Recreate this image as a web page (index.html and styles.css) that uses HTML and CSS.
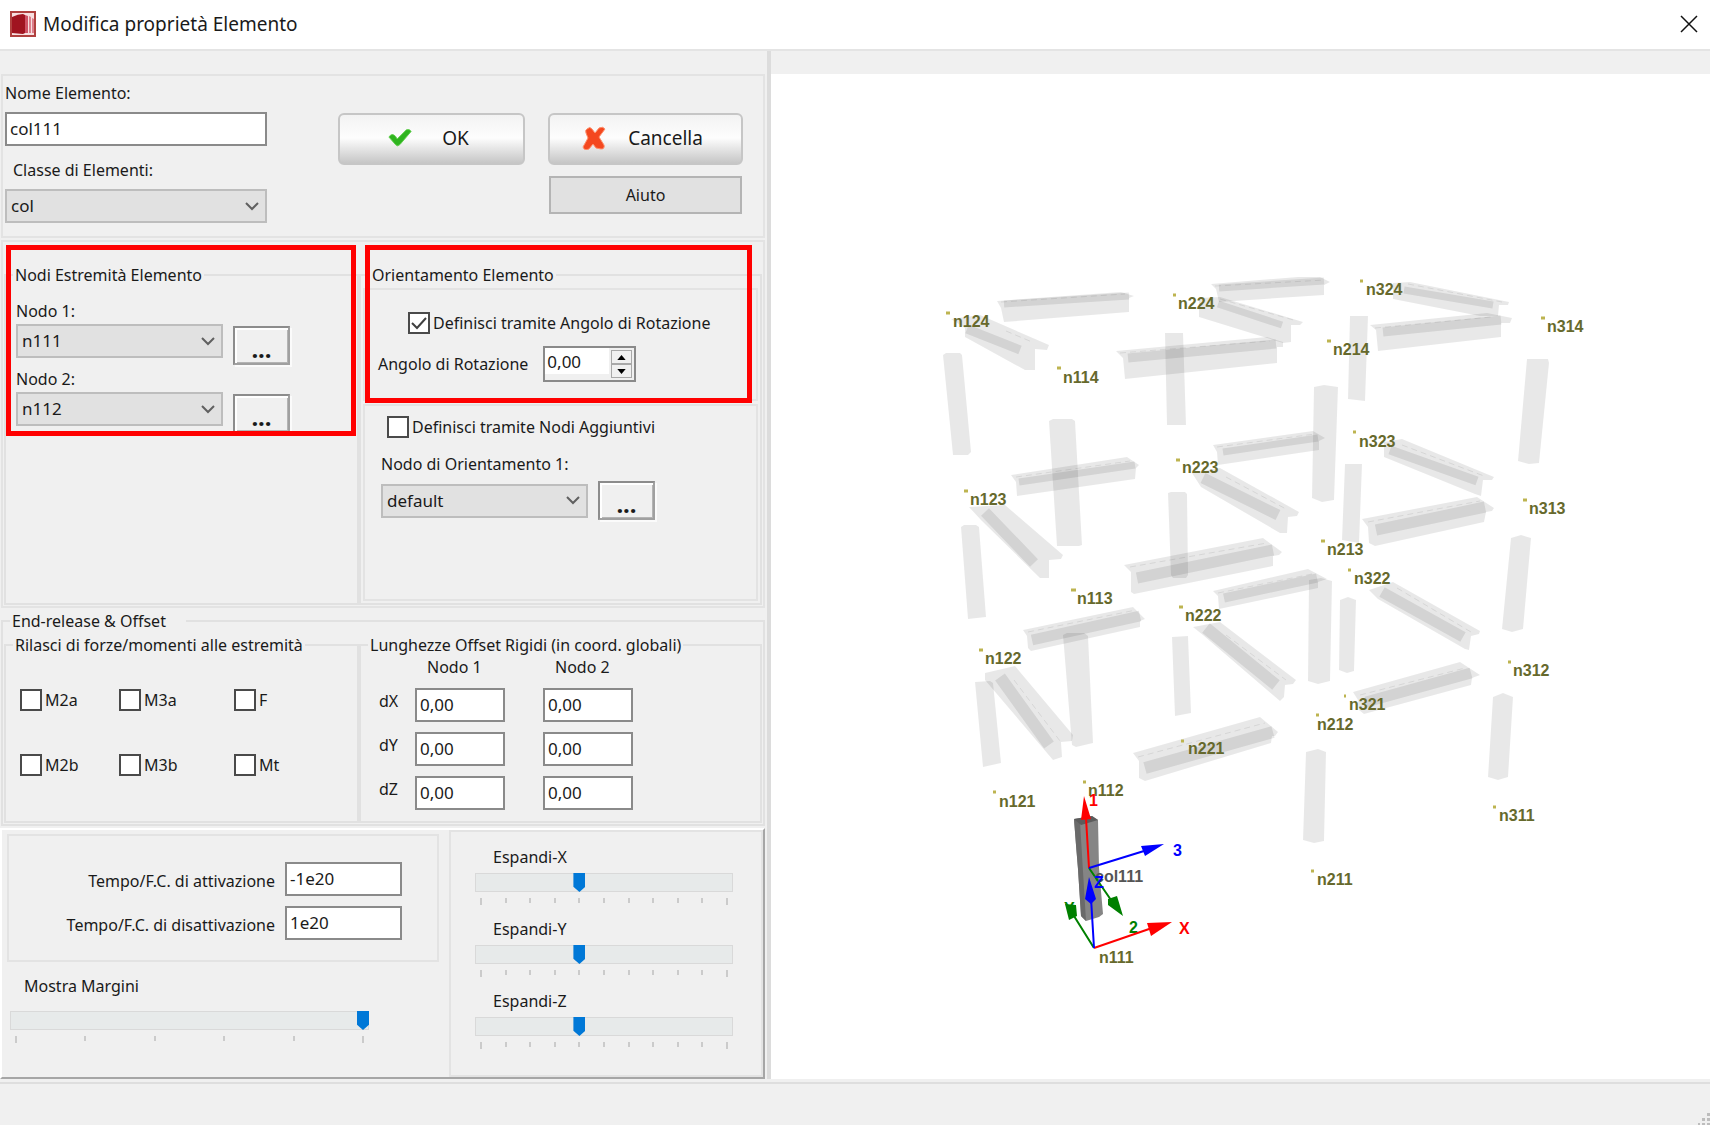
FILE: index.html
```html
<!DOCTYPE html>
<html lang="it">
<head>
<meta charset="utf-8">
<title>Modifica proprietà Elemento</title>
<link rel="stylesheet" href="styles.css">
</head>
<body>
<header class="titlebar">
  <svg class="app-icon" viewBox="0 0 26 26" aria-hidden="true">
    <rect x="1" y="1" width="24" height="24" fill="#f7dfe0" stroke="#b0413f" stroke-width="2"/>
    <path d="M2 6Q8 3 13 3l2 1v18l-2 1-11-1z" fill="#a01420"/>
    <path d="M15 4l3 1v17h-3z" fill="#cf5366"/>
    <path d="M19 5l2 1v16h-2zM22 7l2 1v14h-2z" fill="#dc7f8c"/>
  </svg>
  <h1 class="title">Modifica proprietà Elemento</h1>
  <button class="close" type="button" aria-label="Chiudi"><svg viewBox="0 0 18 18"><path d="M1 1l16 16M17 1 1 17"/></svg></button>
</header>

<main class="workspace">
  <form class="side">
    <section class="panel identity">
      <div class="identity-fields">
        <label for="nome">Nome Elemento:</label>
        <input id="nome" class="field" type="text" value="col111">
        <label class="indent" for="classe">Classe di Elementi:</label>
        <select id="classe" class="combo"><option>col</option></select>
      </div>
      <div class="actions">
        <button class="glossy ok" type="button">
          <svg viewBox="0 0 26 20"><path d="M1 9q3-5 7-1l2 3L20 1q4-1 5 2L13 17q-3 3-5 0z" fill="#2fb41f" stroke="#5fce4c"/></svg>OK</button>
        <div class="action-stack">
          <button class="glossy" type="button">
            <svg viewBox="0 0 24 24"><path d="M5 3q3-3 5 0l3 4 4-5q4-2 6 1l-6 8 5 8q1 4-3 4l-5-1-3-4-4 5q-5 2-6-2l5-9-2-5q-1-3 1-4z" fill="#f4481f" stroke="#ff8f6b"/></svg>Cancella</button>
          <button class="flat" type="button">Aiuto</button>
        </div>
      </div>
    </section>

    <section class="panel geometry">
      <fieldset class="group">
        <legend>Nodi Estremità Elemento</legend>
        <div class="nodes">
          <label for="nodo1">Nodo 1:</label>
          <div class="pick"><select id="nodo1" class="combo"><option>n111</option></select><button class="more" type="button">...</button></div>
          <label for="nodo2">Nodo 2:</label>
          <div class="pick"><select id="nodo2" class="combo"><option>n112</option></select><button class="more" type="button">...</button></div>
        </div>
      </fieldset>
      <fieldset class="group orientation">
        <legend>Orientamento Elemento</legend>
        <div class="panel by-angle">
          <label class="check"><input type="checkbox" checked>Definisci tramite Angolo di Rotazione</label>
          <div class="angle">
            <label for="angolo">Angolo di Rotazione</label>
            <div class="spin">
              <input id="angolo" type="text" value="0,00">
              <div class="spin-buttons">
                <button type="button" aria-label="Aumenta"><svg viewBox="0 0 10 6"><path d="M5 0l5 6H0z"/></svg></button>
                <button type="button" aria-label="Diminuisci"><svg viewBox="0 0 10 6"><path d="M0 0h10L5 6z"/></svg></button>
              </div>
            </div>
          </div>
        </div>
        <div class="panel by-nodes">
          <label class="check"><input type="checkbox">Definisci tramite Nodi Aggiuntivi</label>
          <label class="orient-label" for="orient">Nodo di Orientamento 1:</label>
          <div class="pick centered"><select id="orient" class="combo"><option>default</option></select><button class="more" type="button">...</button></div>
        </div>
      </fieldset>
      <div class="highlight highlight-nodes"></div>
      <div class="highlight highlight-angle"></div>
    </section>

    <fieldset class="group release">
      <legend class="wide">End-release &amp; Offset</legend>
      <div class="halves">
        <fieldset class="group">
          <legend>Rilasci di forze/momenti alle estremità</legend>
          <div class="flags">
            <label class="check"><input type="checkbox">M2a</label>
            <label class="check"><input type="checkbox">M3a</label>
            <label class="check"><input type="checkbox">F</label>
            <label class="check"><input type="checkbox">M2b</label>
            <label class="check"><input type="checkbox">M3b</label>
            <label class="check"><input type="checkbox">Mt</label>
          </div>
        </fieldset>
        <fieldset class="group">
          <legend>Lunghezze Offset Rigidi (in coord. globali)</legend>
          <div class="offsets">
            <span></span><span class="col">Nodo 1</span><span class="col">Nodo 2</span>
            <span class="axis">dX</span><input class="field" aria-label="dX Nodo 1" value="0,00"><input class="field" aria-label="dX Nodo 2" value="0,00">
            <span class="axis">dY</span><input class="field" aria-label="dY Nodo 1" value="0,00"><input class="field" aria-label="dY Nodo 2" value="0,00">
            <span class="axis">dZ</span><input class="field" aria-label="dZ Nodo 1" value="0,00"><input class="field" aria-label="dZ Nodo 2" value="0,00">
          </div>
        </fieldset>
      </div>
    </fieldset>

    <section class="raised">
      <div class="timing">
        <div class="panel times">
          <label for="att">Tempo/F.C. di attivazione</label><input id="att" class="field" value="-1e20">
          <label for="dis">Tempo/F.C. di disattivazione</label><input id="dis" class="field" value="1e20">
        </div>
        <div class="slider margins">
          <label for="margini">Mostra Margini</label>
          <input id="margini" type="range" min="0" max="5" value="5">
          <div class="ticks"><i></i><i></i><i></i><i></i><i></i><i></i></div>
        </div>
      </div>
      <div class="panel expand">
        <div class="slider">
          <label for="ex">Espandi-X</label>
          <input id="ex" type="range" min="0" max="10" value="4">
          <div class="ticks"><i></i><i></i><i></i><i></i><i></i><i></i><i></i><i></i><i></i><i></i><i></i></div>
        </div>
        <div class="slider">
          <label for="ey">Espandi-Y</label>
          <input id="ey" type="range" min="0" max="10" value="4">
          <div class="ticks"><i></i><i></i><i></i><i></i><i></i><i></i><i></i><i></i><i></i><i></i><i></i></div>
        </div>
        <div class="slider">
          <label for="ez">Espandi-Z</label>
          <input id="ez" type="range" min="0" max="10" value="4">
          <div class="ticks"><i></i><i></i><i></i><i></i><i></i><i></i><i></i><i></i><i></i><i></i><i></i></div>
        </div>
      </div>
    </section>
  </form>

  <section class="viewer">
    <svg class="scene" viewBox="771 74 939 1005" role="img" aria-label="Modello 3D">
      <g class="solid">
        <!-- columns -->
        <path d="M943 355l3-2h14l2 2 9 97-3 3h-15z"/>
        <path d="M1049 421l4-2h19l3 2 7 124-3 1h-22z"/>
        <path d="M1165 333h18l3 92h-19z"/>
        <path d="M961 527l3-2h12l3 2 7 90-18 2z"/>
        <path d="M1168 493l3-1h14l2 2 1 81-2 3h-13l-2-3z"/>
        <path d="M1350 316h18l-3 85-17-2z"/>
        <path d="M1314 387l10-2 14 2-4 113-12 2-10-4z"/>
        <path d="M1527 359h21l1 4-10 100-10 1-11-3z"/>
        <path d="M1345 464h17l-3 79-17-3z"/>
        <path d="M1511 538l10-3 10 3-8 91-11 3-10-3z"/>
        <path d="M1309 580l12-2 11 3-2 100-12 3-10-3z"/>
        <path d="M1340 600l8-3 8 3-2 71-7 2-8-3z"/>
        <path d="M1493 697l10-4 10 4-5 80-10 3-10-3z"/>
        <path d="M1172 637l16-1 3 77-16 3z"/>
        <path d="M975 682l15-1 3 2 8 80-18 4z"/>
        <path d="M1063 635l4-2h17l4 3 5 107-17 4-4-2z"/>
        <path d="M1306 752l12-3 8 3-2 89-10 2-11-3z"/>
        <!-- beams -->
        <path d="M997 301l124-9 13 4-5 2v14l-125 10-3-14z"/>
        <path d="M951 319l29-4 69 30-2 5-12-1v21h-10l-60-33v-9z"/>
        <path d="M1211 284l87-7h22l10 5-6 3v10l-105 7-3-13z"/>
        <path d="M1199 298l21-1 83 25-3 3h-9v17l-8 1-84-26z"/>
        <path d="M1116 351l151-14 16 5v5h-6v16l-152 16-2-21z"/>
        <path d="M1393 283l17-1 99 20-1 3h-9l-1 11h-18l-87-17z"/>
        <path d="M1370 325l117-12 25 5-2 5h-9v14l-123 14-2-21z"/>
        <path d="M1011 475l116-18 12 8-3 3-1 11-118 17-1-14z"/>
        <path d="M1213 445l100-14 12 7-6 3v9l-101 15-1-13z"/>
        <path d="M1192 473l28-5 79 44-2 4-9 1-1 16h-7l-79-46z"/>
        <path d="M969 507l36-2 58 50-2 4-12 1v18h-9l-59-58z"/>
        <path d="M1124 565l139-27 19 14-3 3-6 1v10l-139 28-3-2v-20z"/>
        <path d="M1213 591l95-22 19 10-9 3v6l-99 21-1-13z"/>
        <path d="M1384 442l18-3 92 38-2 3h-9l-2 16-6-2-91-37z"/>
        <path d="M1362 519l115-22 17 11-2 3-6 1-2 10-109 24-6-3-1-16z"/>
        <path d="M1369 590l24-8 87 49-1 3-8 2-2 14-4-1-87-50z"/>
        <path d="M1353 692l107-30 20 13-8 3-1 7-107 29-5-4-1-10z"/>
        <path d="M1023 630l110-23 12 12-5 2v6l-109 24-3-3-1-12z"/>
        <path d="M1193 627l27-5 76 58-3 4-8 1-1 12-4 4-77-66z"/>
        <path d="M985 673l30-7 58 69-1 6-11 1 1 15-9 3-68-80z"/>
        <path d="M1133 753l127-36 18 15-3 4h-3l-1 7-126 38-6-3v-17z"/>
      </g>
      <g class="web">
        <path stroke-width="7" d="M1004 304l125-8M1219 288l105-7M1218 304l64 21M1404 290l89 15M1019 482l116-17M1223 452l95-14"/>
        <path stroke-width="9" d="M967 329l53 21M1128 358l148-14M1383 332l118-12M1224 598l93-20M1390 450l87 31"/>
        <path stroke-width="11" d="M1203 478l75 37M985 512l49 51M1137 578l136-28M1376 530l109-23M1382 592l81 45M1366 702l105-29M1032 640l108-24"/>
        <path stroke-width="12" d="M1206 628l70 57M1000 677l49 68M1145 768l128-36"/>
      </g>
      <g class="seams">
        <path d="M1001 302l124-8M1215 286l110-6M1220 299l77 22M1120 353l150-12M1006 331l26 11M1408 284l94 18M1375 328l116-11M1016 477l114-16M1217 447l98-13M1226 477l60 32M1130 567l137-24M1218 593l94-19M1402 445l82 31M1368 522l112-21M1397 588l74 44M1360 695l105-27M1028 632l108-22M1226 635l60 45M1014 680l46 61M1138 757l127-34"/>
      </g>

      <g class="markers">
        <path d="M946 313h4M1173 295h3M1057 368h4M1176 460h4M964 491h4M1360 281h3M1541 318h4M1327 341h4M1353 432h3M1523 500h4M1321 541h4M1348 570h3M1508 662h3M1344 696h2M1316 715h3M1071 590h5M1179 607h4M979 650h4M1181 741h3M1083 782h3M993 792h3M1311 871h3M1493 807h3"/>
      </g>
      <g class="names">
        <text x="953" y="327">n124</text><text x="1178" y="309">n224</text><text x="1063" y="383">n114</text>
        <text x="1182" y="473">n223</text><text x="970" y="505">n123</text><text x="1366" y="295">n324</text>
        <text x="1547" y="332">n314</text><text x="1333" y="355">n214</text><text x="1359" y="447">n323</text>
        <text x="1529" y="514">n313</text><text x="1327" y="555">n213</text><text x="1354" y="584">n322</text>
        <text x="1513" y="676">n312</text><text x="1349" y="710">n321</text><text x="1317" y="730">n212</text>
        <text x="1077" y="604">n113</text><text x="1185" y="621">n222</text><text x="985" y="664">n122</text>
        <text x="1188" y="754">n221</text><text x="1088" y="796">n112</text><text x="999" y="807">n121</text>
        <text x="1099" y="963">n111</text><text x="1317" y="885">n211</text><text x="1499" y="821">n311</text>
      </g>

      <!-- selected element with local and global axes -->
      <path d="M1074 819l18-3 6 4 1 48 4 46-4 3-13 4-5-5-3-47-2-24z" fill="#858585"/>
      <path d="M1074 819l6 3 6 99-5-5-3-47-2-24z" fill="#6a6a6a"/>
      <path d="M1074 819l18-3 6 4-17 5z" fill="#5c5c5c"/>
      <text class="picked" x="1095" y="882">col111</text>
      <g class="axis-green">
        <path d="M1089 868l22 32M1094 948l-20-32"/>
        <path class="tip" d="M1108 899l9-3 6 20-15-11zM1065 904l11 1 1 11-8 4z"/>
        <text x="1129" y="933">2</text><text x="1064" y="914">Y</text>
      </g>
      <g class="axis-red">
        <path d="M1089 868l-3-50M1094 948l58-20"/>
        <path class="tip" d="M1084 796l7 23-10 1zM1172 922l-25 1 4 13z"/>
        <text x="1089" y="806">1</text><text x="1179" y="934">X</text>
      </g>
      <g class="axis-blue">
        <path d="M1089 868l55-17M1094 948l-3-50"/>
        <path class="tip" d="M1164 844l-23 2 4 10zM1089 877l7 22-5 5-6-5z"/>
        <text x="1173" y="856">3</text><text x="1094" y="888">Z</text>
      </g>
    </svg>
  </section>
</main>

<footer class="statusbar">
  <svg class="grip" viewBox="0 0 12 12" aria-hidden="true"><path d="M9 0h3v3H9zM9 5h3v3H9zM4 5h3v3H4zM9 10h3v2H9zM4 10h3v2H4zM0 10h2v2H0z"/></svg>
</footer>
</body>
</html>
```
FILE: styles.css
```css
* { box-sizing: border-box; }

body {
  margin: 0;
  min-height: 100vh;
  display: flex;
  flex-direction: column;
  background: #f0f0f0;
  color: #1a1a1a;
  font: 16px/22px "Noto Sans", sans-serif;
}

input, select, button { font: inherit; color: inherit; margin: 0; }
label, .col, .axis, legend { white-space: nowrap; }

/* title bar */
.titlebar {
  display: flex;
  align-items: center;
  gap: 7px;
  height: 51px;
  padding: 0 12px 2px 10px;
  background: #fff;
  border-bottom: 2px solid #e4e4e4;
}
.app-icon { width: 26px; height: 26px; }
.title { margin: 0; font-size: 19px; font-weight: 400; line-height: 26px; }
.close { margin-left: auto; padding: 0; width: 18px; height: 18px; border: 0; background: none; }
.close svg { display: block; width: 18px; height: 18px; stroke: #111; stroke-width: 1.5; fill: none; }

/* main split */
.workspace { flex: 1; display: grid; grid-template-columns: 771px 1fr; }
.side {
  display: flex;
  flex-direction: column;
  gap: 3px;
  padding: 23px 2px 0 0;
  border-right: 4px solid #dcdcdc;
}
.viewer { margin-top: 23px; background: #fff; display: flex; }
.scene { flex: 1; width: 100%; min-width: 0; }

.panel { border: 2px solid #e3e3e3; }
.group { min-width: 0; margin: 0; padding: 0; border: 2px solid #e1e1e1; }
.group legend { margin-left: 7px; padding: 0 2px; }
.group legend.wide { margin-left: 6px; padding-right: 20px; }

/* controls */
.field {
  width: 100%;
  height: 34px;
  padding: 0 3px 2px;
  border: 2px solid #8a8a8a;
  border-radius: 0;
  background: #fff;
  font-size: 17px;
}
.combo {
  height: 34px;
  padding: 0 4px;
  border: 2px solid #bdbdbd;
  border-radius: 0;
  appearance: none;
  font-size: 17px;
  background: #e1e1e1 url("data:image/svg+xml,%3Csvg xmlns='http://www.w3.org/2000/svg' width='14' height='9'%3E%3Cpath d='M1 1l6 6 6-6' fill='none' stroke='%23606060' stroke-width='2'/%3E%3C/svg%3E") no-repeat right 6px center;
}
.more {
  width: 57px;
  height: 39px;
  padding: 6px 0 0;
  border: 2px solid;
  border-color: #8c8c8c #a0a0a0 #a0a0a0 #8c8c8c;
  background: #f0f0f0;
  box-shadow: inset 2px 2px #fff, inset -1px -1px #b4b4b4, 2px 2px #fbfbfb;
  font-weight: 700;
  font-size: 24px;
  line-height: 22px;
}
.check { display: flex; align-items: center; gap: 3px; height: 22px; }
.check input {
  appearance: none;
  flex: none;
  width: 22px;
  height: 22px;
  border: 2px solid #4a4a4a;
  background: #fff;
}
.check input:checked {
  background: #fff url("data:image/svg+xml,%3Csvg xmlns='http://www.w3.org/2000/svg' width='18' height='18'%3E%3Cpath d='M2 9l5 5 9-10' fill='none' stroke='%23404040' stroke-width='2'/%3E%3C/svg%3E") center no-repeat;
}

/* name, class and actions */
.identity { display: flex; gap: 71px; margin-left: 1px; padding: 6px 0 13px 2px; }
.identity-fields { display: flex; flex-direction: column; gap: 8px; width: 262px; }
.indent { margin-top: 5px; padding-left: 8px; }
.actions { display: flex; align-items: flex-start; gap: 23px; padding-top: 31px; }
.action-stack { display: flex; flex-direction: column; align-items: center; gap: 11px; }
.glossy {
  display: flex;
  align-items: center;
  justify-content: center;
  gap: 22px;
  width: 195px;
  height: 52px;
  padding: 0 6px 2px 0;
  border: 2px solid #c6c6c6;
  border-radius: 6px;
  background: linear-gradient(#f3f3f3, #fdfdfd 48%, #c6c6c6);
  font-size: 19px;
}
.glossy svg { width: 24px; height: 24px; }
.ok { width: 187px; gap: 30px; }
.flat { width: 193px; height: 38px; padding: 0; border: 2px solid #b4b4b4; background: #e1e1e1; }

/* end nodes and orientation */
.geometry {
  position: relative;
  display: grid;
  grid-template-columns: 355px 1fr;
  margin: -1px 0 0 1px;
  padding: 22px 1px 1px;
}
.nodes { display: flex; flex-direction: column; gap: 3px; padding: 14px 0 0 10px; }
.nodes .pick { margin-top: -1px; }
.pick { display: flex; gap: 10px; }
.pick .combo { width: 207px; }
.pick .more { margin-top: 2px; }
.centered { align-items: center; }
.centered .more { margin-top: 0; }
.orientation { padding: 2px; display: flex; flex-direction: column; gap: 3px; }
.by-angle { display: flex; flex-direction: column; gap: 12px; padding: 22px 0 17px 13px; }
.by-angle .check { margin-left: 30px; }
.angle { display: flex; align-items: center; gap: 15px; }
.spin { display: flex; width: 93px; height: 36px; border: 2px solid #8a8a8a; background: #f0f0f0; }
.spin input { flex: 1; min-width: 0; height: 26px; padding: 0 2px; border: 0; background: #fff; font-size: 17px; }
.spin-buttons { display: flex; flex-direction: column; padding: 2px; background: #f0f0f0; }
.spin-buttons button { display: flex; align-items: center; justify-content: center; width: 21px; height: 14px; padding: 0; border: 1px solid #a8a8a8; background: #f0f0f0; }
.spin-buttons svg { width: 9px; height: 5px; }
.by-nodes { display: flex; flex-direction: column; gap: 6px; min-height: 197px; padding: 10px 0 0 16px; }
.by-nodes .check { margin-left: 6px; }
.orient-label { margin-top: 9px; }

.highlight { position: absolute; border: 5px solid #f00; pointer-events: none; }
.highlight-nodes { left: 3px; top: 3px; width: 350px; height: 191px; }
.highlight-angle { left: 362px; top: 3px; width: 387px; height: 158px; }

/* releases and offsets */
.release { margin: -1px 0 0 1px; padding: 2px 1px 1px; }
.halves { display: grid; grid-template-columns: 355px 1fr; }
.flags { display: grid; grid-template-columns: 99px 115px 1fr; row-gap: 43px; padding: 33px 0 0 14px; }
.offsets { display: grid; grid-template-columns: 36px 90px 90px; gap: 10px 0; padding: 1px 0 11px 18px; }
.offsets > :nth-child(3n) { margin-left: 38px; width: 90px; }
.col { padding-left: 12px; line-height: 21px; }
.axis { line-height: 26px; }

/* activation times and sliders */
.raised {
  flex: 1;
  display: grid;
  grid-template-columns: 440px 1fr;
  gap: 7px;
  margin-top: -1px;
  border: 2px solid;
  border-color: #fff #a6a6a6 #a6a6a6 #fff;
}
.times {
  display: grid;
  grid-template-columns: 266px 117px;
  gap: 10px;
  margin: 4px 3px 0 5px;
  padding: 26px 0 20px;
}
.times label { padding-top: 5px; line-height: 28px; text-align: right; }
.slider { display: flex; flex-direction: column; }
.slider label { padding-left: 18px; }
.slider input {
  appearance: none;
  height: 19px;
  margin-top: 5px;
  border: 2px solid #d9d9d9;
  border-width: 1px 0;
  box-shadow: inset 1px 0 #d9d9d9, inset -1px 0 #d9d9d9;
  background: #e7eaea;
}
.slider input::-webkit-slider-thumb {
  appearance: none;
  width: 12px;
  height: 19px;
  background: #0078d7;
  clip-path: polygon(0 0, 100% 0, 100% 72%, 50% 100%, 0 72%);
}
.ticks { display: flex; justify-content: space-between; height: 6px; margin-top: 6px; padding: 0 5px; }
.ticks i { width: 2px; height: 5px; background: #cbcbcb; }
.ticks i:first-child, .ticks i:last-child { height: 7px; }
.margins { width: 359px; margin: 13px 0 0 8px; }
.margins label { padding-left: 14px; }
.margins input { margin-top: 14px; }
.expand { display: flex; flex-direction: column; gap: 14px; padding: 14px 28px 22px 24px; }

/* scene */
.solid path { fill: #000; fill-opacity: .09; }
.web path { stroke: #000; stroke-opacity: .09; fill: none; }
.seams path { stroke: #000; stroke-opacity: .08; fill: none; stroke-dasharray: 6 4; }
.markers path { stroke: #bdb450; stroke-width: 3; }
.names text { fill: #66692c; }
.scene text { font: 700 16px "Liberation Sans", Arial, sans-serif; }
.scene .picked { fill: #555; }
.axis-red path { stroke: #f00; stroke-width: 2; }
.axis-blue path { stroke: #00f; stroke-width: 2; }
.axis-green path { stroke: #008000; stroke-width: 2; }
.axis-red .tip, .axis-red text { fill: #f00; }
.axis-blue .tip, .axis-blue text { fill: #00f; }
.axis-green .tip, .axis-green text { fill: #008000; }
.scene .tip { stroke: none; }

.statusbar { display: flex; align-items: flex-end; justify-content: flex-end; height: 43px; margin-top: 3px; border-top: 2px solid #dedede; }
.grip { width: 12px; height: 12px; fill: #bdbdbd; }
```
